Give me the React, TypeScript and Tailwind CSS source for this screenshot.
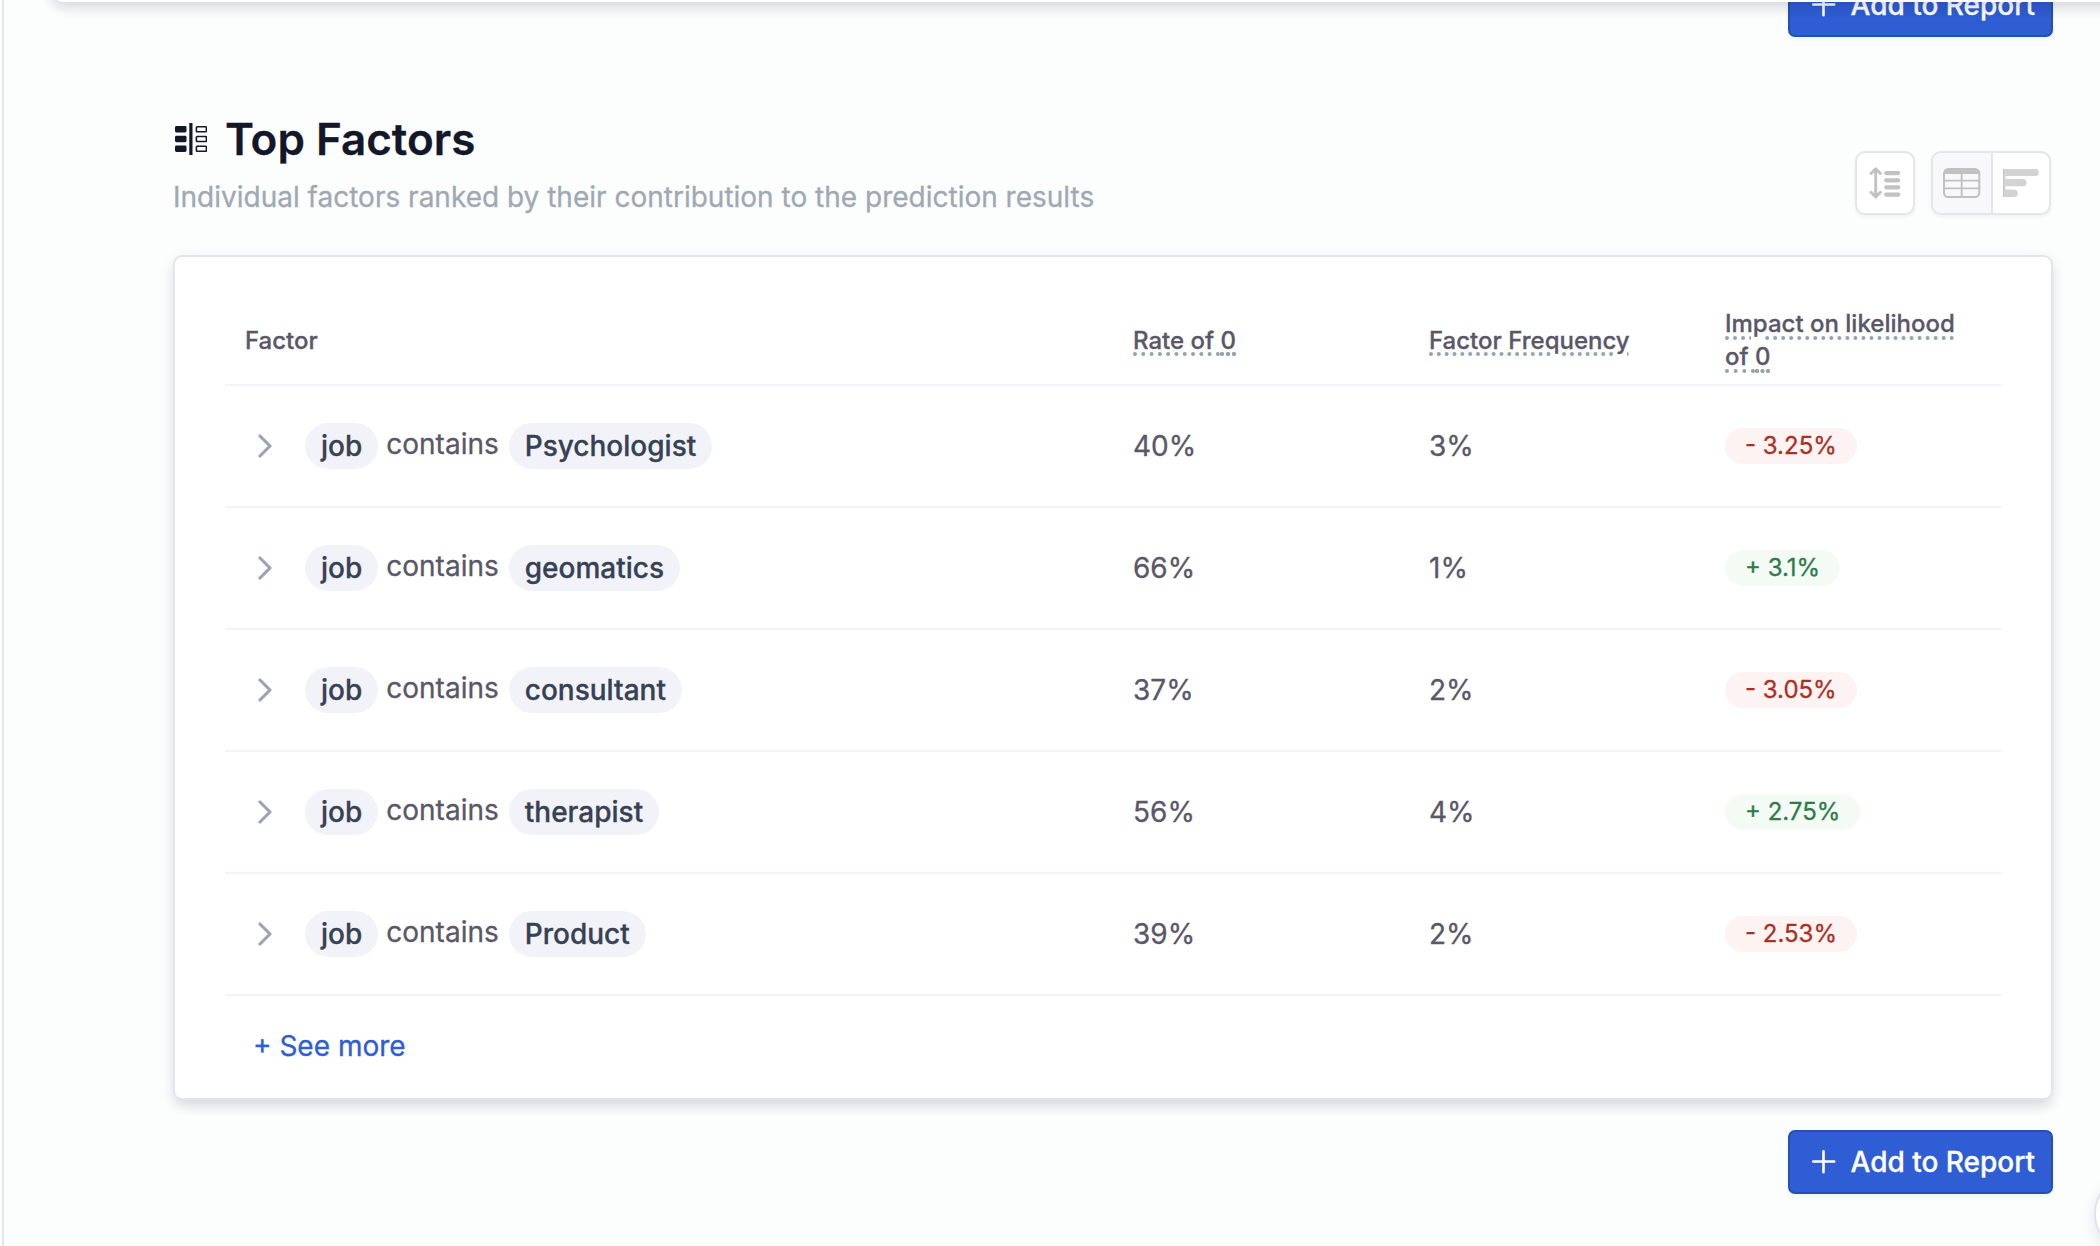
import React from "react";

const factors = [
  { value: "Psychologist", rate: "40%", freq: "3%", impact: "- 3.25%", up: false },
  { value: "geomatics", rate: "66%", freq: "1%", impact: "+ 3.1%", up: true },
  { value: "consultant", rate: "37%", freq: "2%", impact: "- 3.05%", up: false },
  { value: "therapist", rate: "56%", freq: "4%", impact: "+ 2.75%", up: true },
  { value: "Product", rate: "39%", freq: "2%", impact: "- 2.53%", up: false },
];

const dotted =
  "underline decoration-dotted decoration-[4px] underline-offset-[3.5px] decoration-[#94a3ae]";

function AddButton() {
  return (
    <button className="flex h-16 w-[265px] shrink-0 items-center rounded-[7px] border-2 border-[#2450b4] bg-[#2e5dd4] pl-[22px] text-[28px] font-medium whitespace-nowrap text-white shadow-[0_2px_4px_rgba(0,0,0,0.05)]">
      <svg width="24" height="24" viewBox="0 0 24 24" fill="none" stroke="currentColor" strokeWidth="2.6" strokeLinecap="round">
        <path d="M11.5 1.3v21M1.2 11.5h21" />
      </svg>
      <span className="ml-[14.5px]">Add to Report</span>
    </button>
  );
}

function FactorsIcon() {
  return (
    <svg width="32" height="32" viewBox="0 0 32 32" fill="none">
      <g fill="#14172a">
        <rect x="0" y="3" width="11.5" height="6.4" rx="1.4" />
        <rect x="0" y="12.8" width="11.5" height="6.4" rx="1.4" />
        <rect x="0" y="22.6" width="11.5" height="6.4" rx="1.4" />
        <rect x="14.3" y="0" width="3.2" height="32" />
      </g>
      <g stroke="#14172a" strokeWidth="1.6">
        <rect x="21.4" y="3.7" width="10" height="5" rx="0.8" />
        <rect x="21.4" y="13.5" width="10" height="5" rx="0.8" />
        <rect x="21.4" y="23.3" width="10" height="5" rx="0.8" />
      </g>
    </svg>
  );
}

function SortIcon() {
  return (
    <svg width="32" height="32" viewBox="0 0 32 32" fill="none" stroke="#c2c2c2" strokeLinecap="round" strokeLinejoin="round">
      <path d="M6.7 2.4v27M2 6.5l4.7-4.7 4.7 4.7M2 25.2l4.7 4.7 4.7-4.7" strokeWidth="2.9" />
      <path d="M17.2 6.1h12M17.2 13.3h12M17.2 20.3h12M17.2 27.6h12" strokeWidth="4.2" />
    </svg>
  );
}

function TableIcon() {
  return (
    <svg width="38" height="30" viewBox="0 0 38 30" fill="none">
      <rect x="1" y="1" width="35.3" height="28" rx="4.2" stroke="#c1c1c1" strokeWidth="2" />
      <path d="M1 6V4.500Q1 1 4.500 1h28.300Q36.300 1 36.300 4.500V6Z" fill="#c1c1c1" />
      <path d="M1 12.600h35M1 20.400h35M18.700 5v24" stroke="#c1c1c1" strokeWidth="1.900" />
    </svg>
  );
}

function BarsIcon() {
  return (
    <svg width="36" height="30" viewBox="0 0 36 30">
      <path
        fill="#d3d3d3"
        d="M0 1h32.400a3.500 3.500 0 0 1 0 7H2.500v3h17.400a3.600 3.600 0 0 1 0 7.200H2.500v3.300h8.600a3.700 3.700 0 0 1 0 7.500H0Z"
      />
      <path fill="#c4c4c4" d="M0 1h1v28H0Z" />
    </svg>
  );
}

export default function App() {
  return (
    <div className="relative h-[1246px] w-[2100px] overflow-hidden bg-[#fcfefd] pl-[2px] font-['Inter',sans-serif] text-[28px] text-[#5a5768] [-webkit-text-stroke:0.3px]">
      <div className="absolute -top-[62px] left-[50px] z-10 h-16 w-[2150px] rounded-[14px] bg-white shadow-[0_8px_12px_-2px_rgba(20,20,40,0.10),0_4px_16px_rgba(20,20,40,0.07)]" />

      <main className="flex h-full flex-col border-l-2 border-[#e4e5eb] pr-[47px] pl-[169px]">
        <div className="-mt-[27px] flex h-16 shrink-0 justify-end">
          <AddButton />
        </div>

        <header className="flex h-[218px] justify-between">
          <div className="pt-[71px]">
            <h1 className="flex h-[62px] items-center text-[44px] font-semibold text-[#14172a]">
              <span className="ml-[2px] mr-[18px]">
                <FactorsIcon />
              </span>
              Top Factors
            </h1>
            <p className="mt-[5px] leading-[44px] text-[#a0a9b3]">
              Individual factors ranked by their contribution to the prediction results
            </p>
          </div>
          <div className="mr-[2px] flex gap-4 pt-[114px]">
            <button className="flex h-16 w-[60px] items-center justify-center rounded-[10px] border-2 border-[#e6e6e8] bg-white shadow-[0_2px_4px_rgba(0,0,0,0.05)]">
              <SortIcon />
            </button>
            <div className="flex h-16 w-[120px] overflow-hidden rounded-[10px] border-2 border-[#e6e6e8] bg-white shadow-[0_2px_4px_rgba(0,0,0,0.05)]">
              <button className="flex w-[60px] items-center border-r-2 border-[#e6e6e8] bg-[#f8f8fb] pl-[10px]">
                <TableIcon />
              </button>
              <button className="flex flex-1 items-center pl-[10px]">
                <BarsIcon />
              </button>
            </div>
          </div>
        </header>

        <section className="flex h-[845px] shrink-0 flex-col rounded-[9px] border-2 border-[#e4e5ea] bg-white px-[50px] pt-[39px] shadow-[0_8px_12px_-2px_rgba(20,20,40,0.10),0_4px_16px_rgba(20,20,40,0.07)]">
          <div className="grid h-[90px] grid-cols-[888px_296px_296px_296px] items-center border-b-2 border-[#f2f2f8] text-[24px] leading-[33px] font-medium">
            <div className="px-5">Factor</div>
            <div className="px-5">
              <span className={dotted}>
                Rate of <span className={dotted}>0</span>
              </span>
            </div>
            <div className="px-5">
              <span className={dotted}>Factor Frequency</span>
            </div>
            <div className="px-5">
              <span className={dotted}>
                Impact on likelihood of <span className={dotted}>0</span>
              </span>
            </div>
          </div>

          {factors.map((f) => (
            <div key={f.value} className="grid h-[122px] grid-cols-[888px_296px_296px_296px] items-center border-b-2 border-[#f2f2f8]">
              <div className="flex items-center pl-[33px]">
                <svg width="14" height="24" viewBox="0 0 14 24" fill="none" stroke="#9aa2b4" strokeWidth="3.1" strokeLinecap="round" strokeLinejoin="round">
                  <path d="M2 2l10 10L2 22" />
                </svg>
                <span className="ml-[33px] flex h-[46px] items-center rounded-full bg-[#f2f3f8] px-4 font-medium text-[#374154]">job</span>
                <span className="mr-[10px] ml-2 pb-1">contains</span>
                <span className="flex h-[46px] items-center rounded-full bg-[#f2f3f8] px-4 font-medium text-[#374154]">{f.value}</span>
              </div>
              <div className="px-5">{f.rate}</div>
              <div className="px-5">{f.freq}</div>
              <div className="flex px-5">
                <span
                  className={
                    "flex h-9 items-center rounded-full px-5 text-[24px] " +
                    (f.up ? "bg-[#f4fbf5] text-[#2f7a4b]" : "bg-[#fdf3f2] text-[#ab3024]")
                  }
                >
                  {f.impact}
                </span>
              </div>
            </div>
          ))}

          <div className="mt-[29px] pl-7 leading-[42px] text-[#2e5dd6]">+ See more</div>
        </section>

        <div className="mt-[30px] flex h-16 shrink-0 justify-end">
          <AddButton />
        </div>
      </main>

      <div className="absolute top-[1174px] left-[2094px] size-20 rounded-full border-2 border-[#e2e2ea] bg-white shadow-[0_6px_16px_rgba(20,20,40,0.10)]" />
    </div>
  );
}
